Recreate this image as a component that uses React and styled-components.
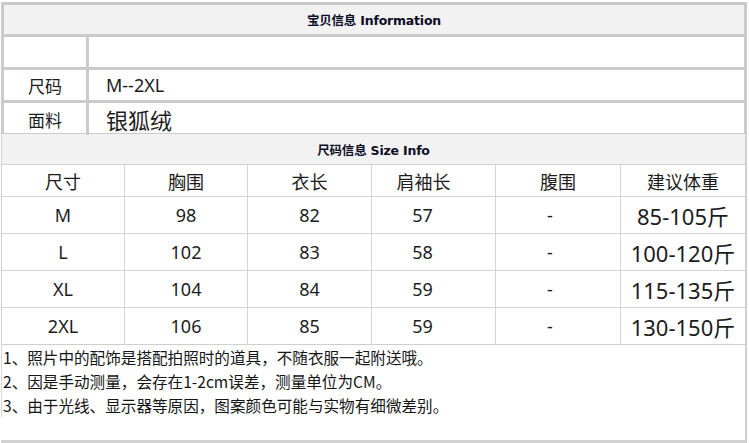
import React from 'react';
import styled, { createGlobalStyle } from 'styled-components';

const GlobalStyle = createGlobalStyle`
  body {
    margin: 0;
    background: #fff;
    font-family: "Noto Sans", "Noto Sans CJK SC", sans-serif;
    color: #1c1c1c;
  }
`;

const Page = styled.div`
  width: 746px;
  margin-left: 1px;
  padding-top: 2px;
`;

const InfoBox = styled.div`
  border: 3px solid #cbcbcb;
  border-bottom-width: 1px;
`;

const SectionTitle = styled.div`
  height: ${p => p.$h}px;
  display: flex;
  align-items: center;
  justify-content: center;
  background: #f2f2f2;
  font-family: "DejaVu Sans", "Noto Sans CJK SC", sans-serif;
  font-weight: bold;
  font-size: 12.5px;
  color: #0d0d26;
  letter-spacing: -0.2px;
`;

const InfoRow = styled.div`
  display: grid;
  grid-template-columns: 85px 1fr;
  height: 30px;
  border-top: 3px solid #cbcbcb;
`;

const InfoLabel = styled.div`
  display: flex;
  align-items: center;
  justify-content: center;
  border-right: 3px solid #cbcbcb;
  font-size: 17px;
  font-family: "Noto Sans CJK SC", sans-serif;
`;

const InfoValue = styled.div`
  display: flex;
  align-items: center;
  padding-left: 17px;
  font-size: ${p => p.$size}px;
  font-family: "Noto Sans", "Noto Sans CJK SC", sans-serif;
`;

const SizeSection = styled.div`
  border-left: 1px solid #cfcfcf;
  border-right: 2px solid #cfcfcf;
  border-bottom: 1px solid #cfcfcf;
`;

const SizeGrid = styled.div`
  display: grid;
  grid-template-columns: 122px 122px 123px 123px 124px 124px;
  grid-template-rows: 31px repeat(4, 36px);
  gap: 1px;
  background: #d4d4d4;
  border-top: 1px solid #d4d4d4;
`;

const HeadCell = styled.div`
  display: flex;
  align-items: center;
  justify-content: center;
  background: #fff;
  font-size: 18px;
  font-family: "Noto Sans CJK SC", sans-serif;
  padding-right: ${p => p.$shift || 0}px;
`;

const Cell = styled.div`
  display: flex;
  align-items: center;
  justify-content: center;
  background: #fff;
  font-size: ${p => p.$size || 18}px;
  padding-right: ${p => p.$shift || 0}px;
`;

const Notes = styled.div`
  height: 95px;
  border-right: 2px solid #cfcfcf;
  border-bottom: 3px solid #d2d2d2;
`;

const NoteList = styled.div`
  border-left: 1px solid #d8d8d8;
  padding-left: 1px;
  font-family: "Noto Sans CJK SC", sans-serif;
  font-size: 15.6px;
  line-height: 24px;
  color: #151515;
`;

const headers = ['尺寸', '胸围', '衣长', '肩袖长', '腹围', '建议体重'];

const sizes = [
  ['M', '98', '82', '57', '-', '85-105斤'],
  ['L', '102', '83', '58', '-', '100-120斤'],
  ['XL', '104', '84', '59', '-', '115-135斤'],
  ['2XL', '106', '85', '59', '-', '130-150斤'],
];

const notes = [
  '1、照片中的配饰是搭配拍照时的道具，不随衣服一起附送哦。',
  '2、因是手动测量，会存在1-2cm误差，测量单位为CM。',
  '3、由于光线、显示器等原因，图案颜色可能与实物有细微差别。',
];

export default function App() {
  return (
    <>
      <GlobalStyle />
      <Page>
        <InfoBox>
          <SectionTitle $h={29}>宝贝信息 Information</SectionTitle>
          <InfoRow>
            <InfoLabel />
            <InfoValue />
          </InfoRow>
          <InfoRow>
            <InfoLabel>尺码</InfoLabel>
            <InfoValue $size={18}>M--2XL</InfoValue>
          </InfoRow>
          <InfoRow>
            <InfoLabel>面料</InfoLabel>
            <InfoValue $size={22}>银狐绒</InfoValue>
          </InfoRow>
        </InfoBox>

        <SizeSection>
          <SectionTitle $h={30}>尺码信息 Size Info</SectionTitle>
          <SizeGrid>
            {headers.map((h, i) => (
              <HeadCell key={h} $shift={i === 3 ? 20 : 0}>{h}</HeadCell>
            ))}
            {sizes.map(row =>
              row.map((v, i) => (
                <Cell
                  key={row[0] + i}
                  $size={i === 5 ? 22 : 18}
                  $shift={i === 3 ? 22 : i === 4 ? 16 : 0}
                >
                  {v}
                </Cell>
              ))
            )}
          </SizeGrid>
        </SizeSection>

        <Notes>
          <NoteList>
            {notes.map(n => (
              <div key={n}>{n}</div>
            ))}
          </NoteList>
        </Notes>
      </Page>
    </>
  );
}
